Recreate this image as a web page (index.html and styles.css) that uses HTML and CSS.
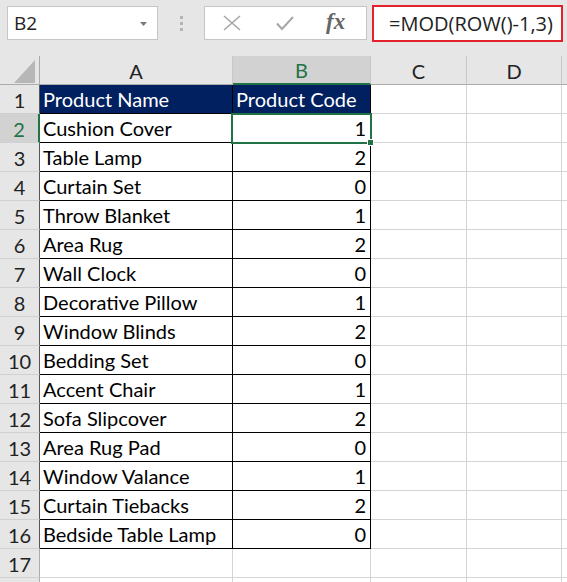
FILE: index.html
```html
<!DOCTYPE html>
<html>
<head>
<meta charset="utf-8">
<link rel="stylesheet" href="styles.css">
</head>
<body>
<div class="topbar">
  <div class="namebox"><span>B2</span><svg class="dd" width="7" height="4" viewBox="0 0 7 4"><path d="M0 0H7L3.5 4Z" fill="#7a7a7a"/></svg></div>
  <div class="grip"><i></i><i></i><i></i></div>
  <div class="btns">
    <svg width="18" height="16" viewBox="0 0 18 16"><path d="M1 1L17 15M17 1L1 15" stroke="#a6a6a6" stroke-width="1.6" fill="none"/></svg>
    <svg width="18" height="16" viewBox="0 0 18 16"><path d="M1 8.5L6 14L17 2" stroke="#a6a6a6" stroke-width="2" fill="none"/></svg>
    <span class="fx">fx</span>
  </div>
  <div class="formula">=MOD(ROW()-1,3)</div>
</div>
<div class="sheet">
  <div class="ch corner"><svg width="22" height="23" viewBox="0 0 22 23"><path d="M21 0V23H0Z" fill="#b7b7b7"/></svg></div>
  <div class="ch">A</div>
  <div class="ch sel">B</div>
  <div class="ch">C</div>
  <div class="ch">D</div>
  <div class="ch last"></div>

  <div class="rh t">1</div><div class="c t hd">Product Name</div><div class="c t hd">Product Code</div><div class="c"></div><div class="c"></div><div class="c"></div>
  <div class="rh t rsel">2</div><div class="c t">Cushion Cover</div><div class="c t n active">1</div><div class="c"></div><div class="c"></div><div class="c"></div>
  <div class="rh t">3</div><div class="c t">Table Lamp</div><div class="c t n">2</div><div class="c"></div><div class="c"></div><div class="c"></div>
  <div class="rh t">4</div><div class="c t">Curtain Set</div><div class="c t n">0</div><div class="c"></div><div class="c"></div><div class="c"></div>
  <div class="rh t">5</div><div class="c t">Throw Blanket</div><div class="c t n">1</div><div class="c"></div><div class="c"></div><div class="c"></div>
  <div class="rh t">6</div><div class="c t">Area Rug</div><div class="c t n">2</div><div class="c"></div><div class="c"></div><div class="c"></div>
  <div class="rh t">7</div><div class="c t">Wall Clock</div><div class="c t n">0</div><div class="c"></div><div class="c"></div><div class="c"></div>
  <div class="rh t">8</div><div class="c t">Decorative Pillow</div><div class="c t n">1</div><div class="c"></div><div class="c"></div><div class="c"></div>
  <div class="rh t">9</div><div class="c t">Window Blinds</div><div class="c t n">2</div><div class="c"></div><div class="c"></div><div class="c"></div>
  <div class="rh t">10</div><div class="c t">Bedding Set</div><div class="c t n">0</div><div class="c"></div><div class="c"></div><div class="c"></div>
  <div class="rh t">11</div><div class="c t">Accent Chair</div><div class="c t n">1</div><div class="c"></div><div class="c"></div><div class="c"></div>
  <div class="rh t">12</div><div class="c t">Sofa Slipcover</div><div class="c t n">2</div><div class="c"></div><div class="c"></div><div class="c"></div>
  <div class="rh t">13</div><div class="c t">Area Rug Pad</div><div class="c t n">0</div><div class="c"></div><div class="c"></div><div class="c"></div>
  <div class="rh t">14</div><div class="c t">Window Valance</div><div class="c t n">1</div><div class="c"></div><div class="c"></div><div class="c"></div>
  <div class="rh t">15</div><div class="c t">Curtain Tiebacks</div><div class="c t n">2</div><div class="c"></div><div class="c"></div><div class="c"></div>
  <div class="rh t">16</div><div class="c t">Bedside Table Lamp</div><div class="c t n">0</div><div class="c"></div><div class="c"></div><div class="c"></div>
  <div class="rh">17</div><div class="c"></div><div class="c"></div><div class="c"></div><div class="c"></div><div class="c"></div>
  <div class="rh"></div><div class="c"></div><div class="c"></div><div class="c"></div><div class="c"></div><div class="c"></div>
</div>
</body>
</html>
```
FILE: styles.css
```css
html, body {
  margin: 0;
  padding: 0;
  background: #ffffff;
  overflow: hidden;
}
body {
  width: 567px;
  height: 582px;
  font-family: Lato, "Liberation Sans", sans-serif;
}
.topbar {
  height: 56px;
  background: #e6e6e6;
  display: flex;
  align-items: flex-start;
  padding-left: 7px;
  box-sizing: border-box;
}
.namebox {
  margin-top: 6px;
  width: 151px;
  height: 34px;
  box-sizing: border-box;
  border: 1px solid #c6c6c6;
  background: #fff;
  display: flex;
  align-items: center;
  justify-content: space-between;
  padding: 0 10px 0 6px;
  font-family: "Open Sans", sans-serif;
  font-size: 19px;
  color: #222;
}
.namebox .dd {
  margin-top: 1px;
}
.grip {
  width: 46px;
  height: 34px;
  margin-top: 6px;
  display: flex;
  flex-direction: column;
  align-items: center;
  justify-content: center;
  gap: 3px;
}
.grip i {
  display: block;
  width: 3px;
  height: 3px;
  background: #b4b4b4;
}
.btns {
  margin-top: 6px;
  width: 163px;
  height: 34px;
  box-sizing: border-box;
  border: 1px solid #c6c6c6;
  background: #fff;
  display: flex;
  align-items: center;
  padding-left: 18px;
  gap: 35px;
}
.btns svg {
  flex: none;
}
.fx {
  font-family: "Liberation Serif", serif;
  font-style: italic;
  font-weight: bold;
  font-size: 23px;
  color: #666666;
  margin-top: -3px;
  margin-left: -3px;
}
.formula {
  margin-left: 5px;
  margin-top: 5px;
  width: 191px;
  height: 37px;
  box-sizing: border-box;
  border: 2px solid #e2212b;
  background: #fff;
  padding-left: 15px;
  display: flex;
  align-items: center;
  font-family: "Open Sans", sans-serif;
  font-size: 20px;
  color: #222;
  white-space: nowrap;
}
.sheet {
  display: grid;
  grid-template-columns: 40px 193px 138px 96px 95px 1fr;
  grid-auto-rows: 29px;
}
.sheet > div {
  box-sizing: border-box;
  border-right: 1px solid #d4d4d4;
  border-bottom: 1px solid #d4d4d4;
  font-size: 20px;
  color: #000;
  white-space: nowrap;
  overflow: visible;
}
.sheet > .ch {
  background: #e6e6e6;
  border-right-color: #c8c8c8;
  border-bottom-color: #ababab;
  display: flex;
  align-items: center;
  justify-content: center;
  color: #222;
  padding-top: 1px;
}
.sheet > .ch.corner {
  justify-content: flex-end;
  align-items: flex-end;
  padding: 0 3px 1px 0;
  border-right-color: #ababab;
}
.sheet > .ch.corner svg {
  display: block;
}
.sheet > .ch.last {
  border-right: none;
}
.sheet > .ch.sel {
  background: #d2d2d2;
  color: #217346;
  border-bottom: 2px solid #217346;
}
.sheet > .rh {
  background: #e6e6e6;
  border-right-color: #ababab;
  border-bottom-color: #d0d0d0;
  display: flex;
  align-items: center;
  justify-content: center;
  color: #222;
  padding-top: 1px;
}
.sheet > .rh.t {
  border-right-color: #555;
}
.sheet > .rh.rsel {
  background: #d2d2d2;
  color: #217346;
  border-right: 2px solid #217346;
}
.sheet > .c {
  display: flex;
  align-items: flex-end;
  padding: 0 3px 2px 3px;
}
.sheet > .c.t {
  border-right-color: #000;
  border-bottom-color: #000;
}
.sheet > .c.hd {
  background: #002060;
  color: #ffffff;
}
.sheet > .c.n {
  justify-content: flex-end;
  padding-right: 4px;
}
.sheet > .c.active {
  position: relative;
}
.sheet > .c.active::before {
  content: "";
  position: absolute;
  left: -2px;
  top: -1px;
  right: -2px;
  bottom: -2px;
  border: 2px solid #217346;
  pointer-events: none;
}
.sheet > .c.active::after {
  content: "";
  position: absolute;
  right: -4px;
  bottom: -4px;
  width: 5px;
  height: 5px;
  background: #217346;
  border: 1px solid #fff;
}
```
